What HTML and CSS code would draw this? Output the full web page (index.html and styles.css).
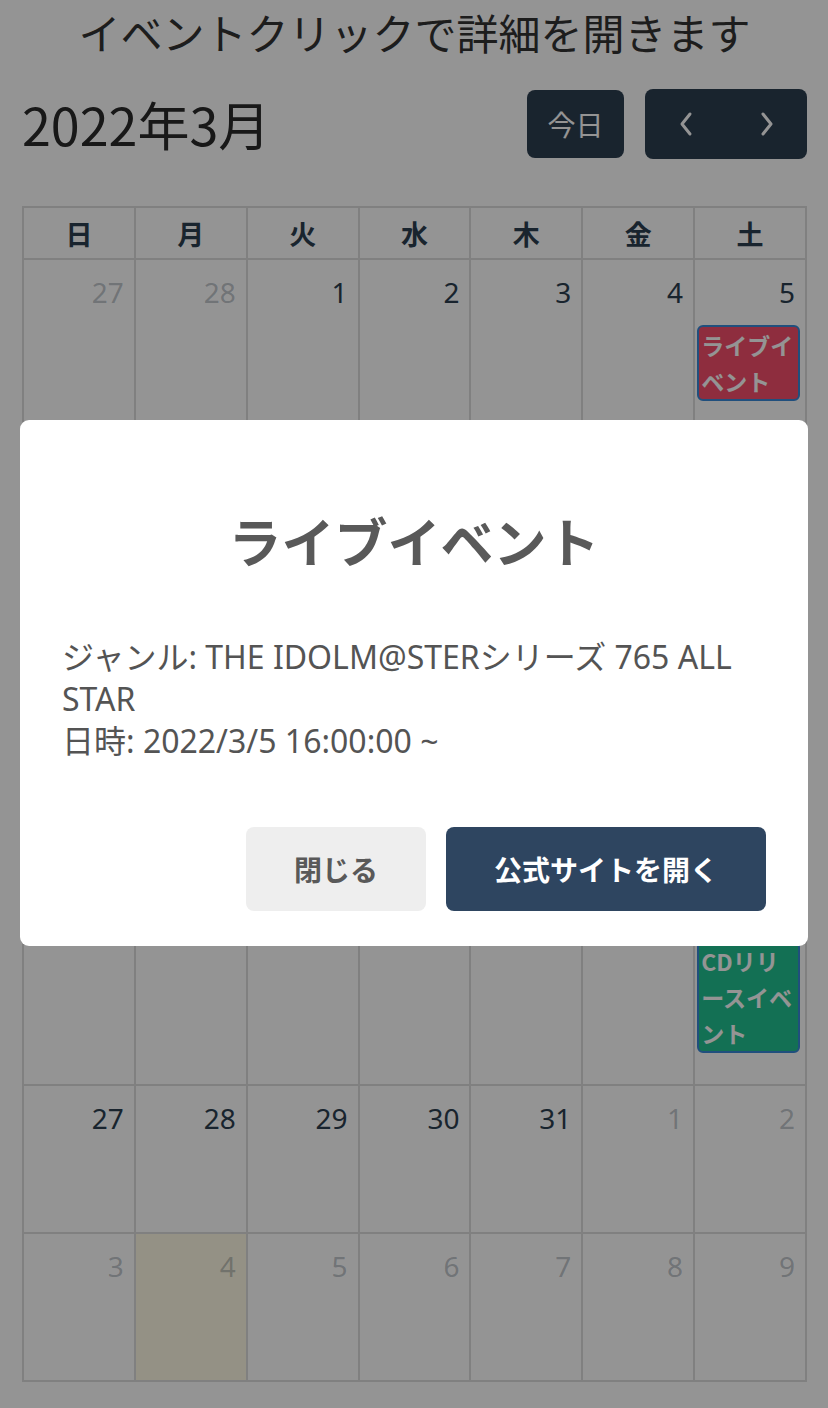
FILE: index.html
```html
<!DOCTYPE html>
<html lang="ja">
<head>
<meta charset="utf-8">
<title>カレンダー</title>
<link rel="stylesheet" href="styles.css">
</head>
<body>
<div class="page">
  <h1 class="page-title">イベントクリックで詳細を開きます</h1>
  <div class="toolbar">
    <h2 class="month">2022年3月</h2>
    <div class="toolbar-actions">
      <button class="btn">今日</button>
      <div class="btn-group">
        <button class="btn btn-icon" aria-label="前">
          <svg width="22" height="28" viewBox="0 0 22 28"><path d="M15 4 L7 14 L15 24" fill="none" stroke="#fff" stroke-width="3" stroke-linecap="round" stroke-linejoin="round"/></svg>
        </button>
        <button class="btn btn-icon" aria-label="次">
          <svg width="22" height="28" viewBox="0 0 22 28"><path d="M7 4 L15 14 L7 24" fill="none" stroke="#fff" stroke-width="3" stroke-linecap="round" stroke-linejoin="round"/></svg>
        </button>
      </div>
    </div>
  </div>

  <div class="cal">
    <div class="dow">日</div><div class="dow">月</div><div class="dow">火</div><div class="dow">水</div><div class="dow">木</div><div class="dow">金</div><div class="dow">土</div>

    <div class="day other"><span class="num">27</span></div>
    <div class="day other"><span class="num">28</span></div>
    <div class="day"><span class="num">1</span></div>
    <div class="day"><span class="num">2</span></div>
    <div class="day"><span class="num">3</span></div>
    <div class="day"><span class="num">4</span></div>
    <div class="day"><span class="num">5</span><div class="event event-red">ライブイベント</div></div>

    <div class="day"><span class="num">6</span></div>
    <div class="day"><span class="num">7</span></div>
    <div class="day"><span class="num">8</span></div>
    <div class="day"><span class="num">9</span></div>
    <div class="day"><span class="num">10</span></div>
    <div class="day"><span class="num">11</span></div>
    <div class="day"><span class="num">12</span></div>

    <div class="day"><span class="num">13</span></div>
    <div class="day"><span class="num">14</span></div>
    <div class="day"><span class="num">15</span></div>
    <div class="day"><span class="num">16</span></div>
    <div class="day"><span class="num">17</span></div>
    <div class="day"><span class="num">18</span></div>
    <div class="day"><span class="num">19</span></div>

    <div class="day"><span class="num">20</span></div>
    <div class="day"><span class="num">21</span></div>
    <div class="day"><span class="num">22</span></div>
    <div class="day"><span class="num">23</span></div>
    <div class="day"><span class="num">24</span></div>
    <div class="day"><span class="num">25</span></div>
    <div class="day"><span class="num">26</span><div class="event event-red">ライブビューイング</div><div class="event event-green">CDリリースイベント</div></div>

    <div class="day"><span class="num">27</span></div>
    <div class="day"><span class="num">28</span></div>
    <div class="day"><span class="num">29</span></div>
    <div class="day"><span class="num">30</span></div>
    <div class="day"><span class="num">31</span></div>
    <div class="day other"><span class="num">1</span></div>
    <div class="day other"><span class="num">2</span></div>

    <div class="day other"><span class="num">3</span></div>
    <div class="day other today"><span class="num">4</span></div>
    <div class="day other"><span class="num">5</span></div>
    <div class="day other"><span class="num">6</span></div>
    <div class="day other"><span class="num">7</span></div>
    <div class="day other"><span class="num">8</span></div>
    <div class="day other"><span class="num">9</span></div>
  </div>
</div>

<div class="overlay">
  <div class="modal" role="dialog">
    <h2 class="modal-title">ライブイベント</h2>
    <div class="modal-body">ジャンル: THE IDOLM@STERシリーズ 765 ALL STAR<br>日時: 2022/3/5 16:00:00 ~</div>
    <div class="modal-actions">
      <button class="mbtn mbtn-cancel">閉じる</button>
      <button class="mbtn mbtn-confirm">公式サイトを開く</button>
    </div>
  </div>
</div>
</body>
</html>
```

FILE: styles.css
```css
* { box-sizing: border-box; }

html, body {
  margin: 0;
  padding: 0;
  background: #fff;
  font-family: "Noto Sans", "Noto Sans CJK JP", sans-serif;
}

.page {
  padding: 0 21px 0 22px;
}

.page-title {
  margin: 0;
  height: 64px;
  line-height: 64px;
  font-size: 42px;
  font-weight: 400;
  text-align: center;
  color: #333;
  font-family: "Noto Sans CJK JP", sans-serif;
}

.toolbar {
  margin-top: 25px;
  height: 70px;
  display: flex;
  align-items: center;
  justify-content: space-between;
}

.month {
  margin: 0;
  font-size: 52px;
  font-weight: 400;
  color: #2a2a2a;
  line-height: 70px;
  font-family: "Noto Sans CJK JP", sans-serif;
}

.toolbar-actions {
  display: flex;
  align-items: center;
  gap: 21px;
}

.btn {
  border: 0;
  background: #2c3e50;
  color: #fff;
  border-radius: 8px;
  height: 68px;
  width: 97px;
  font-size: 28px;
  font-family: "Noto Sans CJK JP", sans-serif;
  display: flex;
  align-items: center;
  justify-content: center;
  padding: 0;
}

.btn-group {
  display: flex;
  background: #2c3e50;
  border-radius: 8px;
  height: 70px;
}

.btn-icon {
  width: 81px;
  height: 70px;
  border-radius: 0;
  background: transparent;
}

.cal {
  margin-top: 47px;
  display: grid;
  grid-template-columns: repeat(7, 1fr);
  grid-template-rows: 50px 168px 138px 188px 324px 146px 146px;
  gap: 2px;
  padding: 2px;
  background: #dddddd;
}

.dow {
  background: #fff;
  display: flex;
  align-items: center;
  justify-content: center;
  font-size: 27px;
  font-weight: 700;
  color: #2c3e50;
  font-family: "Noto Sans CJK JP", sans-serif;
}

.day {
  background: #fff;
  display: flex;
  flex-direction: column;
  align-items: stretch;
}

.num {
  display: block;
  text-align: right;
  padding: 11px 10px 0 0;
  font-size: 28px;
  line-height: 42px;
  color: #2c3e50;
}

.other .num {
  color: rgba(44, 62, 80, 0.3);
}

.today {
  background: #fffae5;
}

.event {
  margin: 12px 5px 0 2px;
  padding: 0 0 0 2px;
  border: 2px solid #3788d8;
  border-radius: 6px;
  font-size: 23px;
  line-height: 36px;
  font-weight: 700;
  color: #fff;
  font-family: "Noto Sans CJK JP", sans-serif;
  word-break: break-all;
  line-break: anywhere;
}

.event + .event {
  margin-top: 4px;
}

.event-red { background: #f54e6b; }
.event-green { background: #22c291; }

.overlay {
  position: fixed;
  inset: 0;
  background: rgba(0, 0, 0, 0.42);
  display: flex;
  align-items: center;
  justify-content: center;
  padding: 0 20px 42px;
}

.modal {
  width: 100%;
  background: #fff;
  border-radius: 9px;
  padding: 0 42px 35px;
}

.modal-title {
  margin: 0;
  padding-top: 80px;
  line-height: 80px;
  font-size: 53px;
  font-weight: 700;
  color: #595959;
  text-align: center;
  font-family: "Noto Sans CJK JP", sans-serif;
}

.modal-body {
  margin-top: 56px;
  font-size: 32px;
  line-height: 42px;
  color: #545454;
  text-align: left;
}

.modal-actions {
  margin-top: 65px;
  display: flex;
  justify-content: flex-end;
  gap: 20px;
}

.mbtn {
  border: 0;
  height: 84px;
  border-radius: 8px;
  font-size: 28px;
  font-weight: 700;
  font-family: "Noto Sans CJK JP", sans-serif;
  padding: 0;
}

.mbtn-cancel {
  width: 180px;
  background: #eeeeee;
  color: #595959;
}

.mbtn-confirm {
  width: 320px;
  background: #2e4560;
  color: #fff;
}
```
